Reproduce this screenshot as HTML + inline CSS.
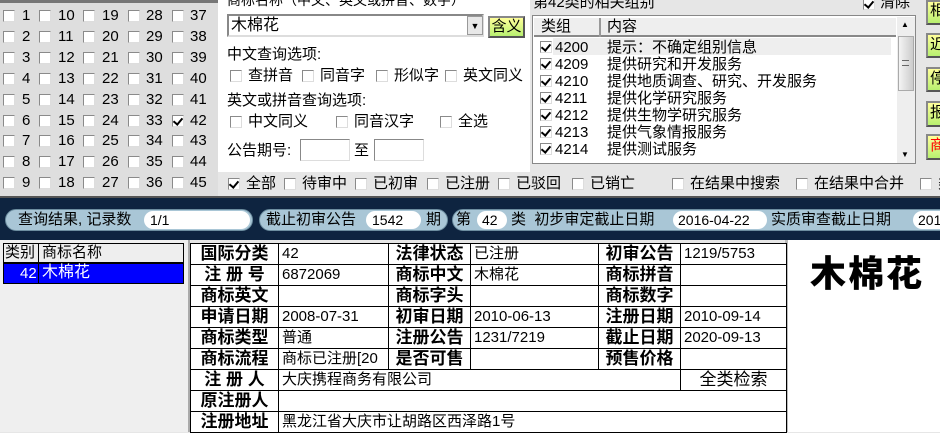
<!DOCTYPE html>
<html><head><meta charset="utf-8"><style>
*{margin:0;padding:0;box-sizing:border-box}
body{width:940px;height:432px;overflow:hidden;position:relative;background:#e6e6e6;font-family:"Liberation Sans","Noto Sans CJK SC","WenQuanYi Zen Hei",sans-serif;font-size:14px;color:#000}
.a{position:absolute;white-space:nowrap;line-height:16px}
.cb{position:absolute;width:12px;height:12px;background:#fff;border:1px solid #8a8a8a;border-right-color:#ddd;border-bottom-color:#ddd}
.ck::after{content:"";position:absolute;left:2px;top:0px;width:4px;height:7px;border:solid #000;border-width:0 2px 2px 0;transform:rotate(40deg)}
.btn{position:absolute;background:linear-gradient(#ffff9a,#b8f070);border:2px solid #555;border-top-color:#888;border-left-color:#888}
.pill{position:absolute;height:22px;background:#a9c6d6;border-radius:11px;border:1px solid #6d8ea0}
.in{position:absolute;background:#fff;border-radius:10px;height:18px;top:1px}
table{position:absolute;border-collapse:collapse;table-layout:fixed}
td{border:1px solid #000;height:21px;padding:0 3px;font-size:15px;line-height:18px;white-space:nowrap;overflow:hidden}
td.l{font-weight:bold;font-size:17px;text-align:center;letter-spacing:0}
</style></head><body>
<div class="a" style="left:0;top:0;width:218px;height:197px;background:#dedede;border-top:3px solid #777"></div>
<div class="a" style="left:218px;top:0;width:312px;height:172px;background:#fff"></div>
<div class="a" style="left:0;top:196px;width:940px;height:2px;background:#555"></div>
<div class="a" style="left:0;top:198px;width:940px;height:42px;background:#0e2440"></div>

<div id="grid"></div>

<div class="a" style="left:227px;top:-8px">商标名称（中文、英文或拼音、数字）</div>
<div class="a" style="left:227px;top:14px;width:257px;height:23px;background:#fff;border:2px solid #888;border-right-color:#ddd;border-bottom-color:#ddd;font-size:16px;line-height:19px;padding-left:2px">木棉花</div>
<div class="a" style="left:467px;top:16px;width:16px;height:19px;background:#e8e8e8;border:1px solid #999;font-size:9px;text-align:center;line-height:19px">▼</div>
<div class="btn" style="left:488px;top:16px;width:37px;height:22px;text-align:center;line-height:17px;font-size:15px">含义</div>
<div class="a" style="left:227px;top:47px;font-size:15px">中文查询选项:</div>
<div class="a" style="left:227px;top:93px;font-size:15px">英文或拼音查询选项:</div>
<div class="a" style="left:227px;top:143px;font-size:15px">公告期号:</div>
<div class="a" style="left:300px;top:139px;width:50px;height:22px;background:#fff;border:1px solid #888;border-right-color:#ddd;border-bottom-color:#ddd"></div>
<div class="a" style="left:354px;top:143px;font-size:15px">至</div>
<div class="a" style="left:374px;top:139px;width:50px;height:22px;background:#fff;border:1px solid #888;border-right-color:#ddd;border-bottom-color:#ddd"></div>

<div class="a" style="left:533px;top:-5px;font-size:15px">第42类的相关组别</div>
<div class="cb ck" style="left:863px;top:-2px"></div>
<div class="a" style="left:880px;top:-5px;font-size:15px">清除</div>
<div class="a" style="left:532px;top:15px;width:384px;height:149px;background:#fff;border:1px solid #888"></div>
<div class="a" style="left:534px;top:18px;width:362px;height:19px;background:#eee;border-bottom:2px solid #888"></div>
<div class="a" style="left:599px;top:18px;width:2px;height:19px;background:#999"></div>
<div class="a" style="left:541px;top:19px;font-size:15px">类组</div>
<div class="a" style="left:607px;top:19px;font-size:15px">内容</div>
<div class="a" style="left:553px;top:38px;width:338px;height:17px;background:#eee"></div>
<div class="a" style="left:897px;top:17px;width:18px;height:146px;background:#eee"></div>
<div class="a" style="left:901px;top:20px;font-size:8px;line-height:10px">▲</div>
<div class="a" style="left:901px;top:150px;font-size:8px;line-height:10px">▼</div>
<div class="a" style="left:898px;top:36px;width:16px;height:55px;background:linear-gradient(90deg,#f4f4f4,#ccc);border:1px solid #aaa"></div>
<div class="a" style="left:902px;top:60px;width:7px;height:6px;border-top:1px solid #666;border-bottom:1px solid #666"></div>
<div id="list"></div>

<div class="btn" style="left:926px;top:0;width:20px;height:25px;font-size:15px;padding-left:2px;line-height:18px">相</div>
<div class="btn" style="left:926px;top:33px;width:20px;height:25px;font-size:15px;padding-left:2px;line-height:20px">近</div>
<div class="btn" style="left:926px;top:67px;width:20px;height:25px;font-size:15px;padding-left:2px;line-height:20px">停</div>
<div class="btn" style="left:926px;top:101px;width:20px;height:26px;font-size:15px;padding-left:2px;line-height:20px">报</div>
<div class="btn" style="left:926px;top:134px;width:20px;height:26px;font-size:15px;padding-left:2px;line-height:20px;color:red">商</div>

<div class="pill" style="left:5px;top:209px;width:248px"><span class="a" style="left:12px;top:2px;font-size:15px">查询结果, 记录数</span><div class="in" style="left:138px;width:106px"><span class="a" style="left:6px;top:1px">1/1</span></div></div>
<div class="pill" style="left:259px;top:209px;width:189px"><span class="a" style="left:6px;top:2px;font-size:15px">截止初审公告</span><div class="in" style="left:106px;width:55px"><span class="a" style="left:6px;top:1px">1542</span></div><span class="a" style="left:166px;top:2px;font-size:15px">期</span></div>
<div class="pill" style="left:452px;top:209px;width:500px"><span class="a" style="left:3px;top:2px;font-size:15px">第</span><div class="in" style="left:24px;width:30px"><span class="a" style="left:5px;top:1px">42</span></div><span class="a" style="left:58px;top:2px;font-size:15px">类 &nbsp;初步审定截止日期</span><div class="in" style="left:220px;width:94px"><span class="a" style="left:5px;top:1px">2016-04-22</span></div><span class="a" style="left:318px;top:2px;font-size:15px">实质审查截止日期</span><div class="in" style="left:460px;width:60px"><span class="a" style="left:5px;top:1px">2016</span></div></div>

<div class="a" style="left:0;top:240px;width:188px;height:192px;background:#efefef"></div>
<div class="a" style="left:188px;top:240px;width:2px;height:192px;background:#aaa"></div>
<div class="a" style="left:3px;top:243px;width:181px;height:20px;background:#eee;border:1px solid #000"></div>
<div class="a" style="left:38px;top:243px;width:1px;height:41px;background:#000"></div>
<div class="a" style="left:5px;top:245px;font-size:15px">类别</div>
<div class="a" style="left:42px;top:245px;font-size:15px">商标名称</div>
<div class="a" style="left:3px;top:263px;width:181px;height:21px;background:#0000ff;border:1px solid #000"></div>
<div class="a" style="left:38px;top:263px;width:1px;height:21px;background:#000"></div>
<div class="a" style="left:20px;top:266px;color:#fff;font-size:15px">42</div>
<div class="a" style="left:42px;top:265px;color:#fff;font-size:16px">木棉花</div>

<div class="a" style="left:785px;top:240px;width:3px;height:192px;background:#bbb"></div>
<div class="a" style="left:788px;top:240px;width:152px;height:192px;background:#fff"></div>
<div class="a" style="left:810px;top:254px;font-size:36px;line-height:40px;font-weight:900;letter-spacing:2px">木棉花</div>

<table style="left:190px;top:243px;width:596px;background:#fff">
<colgroup><col style="width:88px"><col style="width:110px"><col style="width:82px"><col style="width:128px"><col style="width:82px"><col style="width:106px"></colgroup>
<tr><td class="l">国际分类</td><td>42</td><td class="l">法律状态</td><td>已注册</td><td class="l">初审公告</td><td>1219/5753</td></tr>
<tr><td class="l">注 册 号</td><td>6872069</td><td class="l">商标中文</td><td>木棉花</td><td class="l">商标拼音</td><td></td></tr>
<tr><td class="l">商标英文</td><td></td><td class="l">商标字头</td><td></td><td class="l">商标数字</td><td></td></tr>
<tr><td class="l">申请日期</td><td>2008-07-31</td><td class="l">初审日期</td><td>2010-06-13</td><td class="l">注册日期</td><td>2010-09-14</td></tr>
<tr><td class="l">商标类型</td><td>普通</td><td class="l">注册公告</td><td>1231/7219</td><td class="l">截止日期</td><td>2020-09-13</td></tr>
<tr><td class="l">商标流程</td><td>商标已注册[20</td><td class="l">是否可售</td><td></td><td class="l">预售价格</td><td></td></tr>
<tr><td class="l">注 册 人</td><td colspan="4">大庆携程商务有限公司</td><td class="l" style="font-weight:normal;text-align:center">全类检索</td></tr>
<tr><td class="l">原注册人</td><td colspan="5"></td></tr>
<tr><td class="l">注册地址</td><td colspan="5">黑龙江省大庆市让胡路区西泽路1号</td></tr>
</table>

<script>
var g='',cx=[3,39,83,128,172],lx=[22,58,102,146,190];
for(var c=0;c<5;c++)for(var r=0;r<9;r++){var n=c*9+r+1,y=10+r*20.9;
g+='<div class="cb'+(n==42?' ck':'')+'" style="left:'+cx[c]+'px;top:'+(y)+'px"></div><div class="a" style="left:'+lx[c]+'px;top:'+(y-2)+'px;font-size:15px">'+n+'</div>';}
var o=[[230,76,'查拼音'],[302,76,'同音字'],[376,76,'形似字'],[445,76,'英文同义'],[230,122,'中文同义'],[336,122,'同音汉字'],[440,122,'全选'],
[228,184,'全部',1],[284,184,'待审中'],[355,184,'已初审'],[427,184,'已注册'],[498,184,'已驳回'],[572,184,'已销亡'],[672,184,'在结果中搜索'],[796,184,'在结果中合并'],[920,184,'类']];
o.forEach(function(e){g+='<div class="cb'+(e[3]?' ck':'')+'" style="left:'+e[0]+'px;top:'+(e[1]-6)+'px"></div><div class="a" style="left:'+(e[0]+18)+'px;top:'+(e[1]-8)+'px;font-size:15px">'+e[2]+'</div>';});
document.getElementById('grid').innerHTML=g;
var L=[['4200','提示：不确定组别信息'],['4209','提供研究和开发服务'],['4210','提供地质调查、研究、开发服务'],['4211','提供化学研究服务'],['4212','提供生物学研究服务'],['4213','提供气象情报服务'],['4214','提供测试服务']],h='';
L.forEach(function(e,i){var y=40+i*17;h+='<div class="cb ck" style="left:540px;top:'+(y+1)+'px"></div><div class="a" style="left:555px;top:'+y+'px;font-size:15px">'+e[0]+'</div><div class="a" style="left:607px;top:'+y+'px;font-size:15px">'+e[1]+'</div>';});
document.getElementById('list').innerHTML=h;
</script>
</body></html>
